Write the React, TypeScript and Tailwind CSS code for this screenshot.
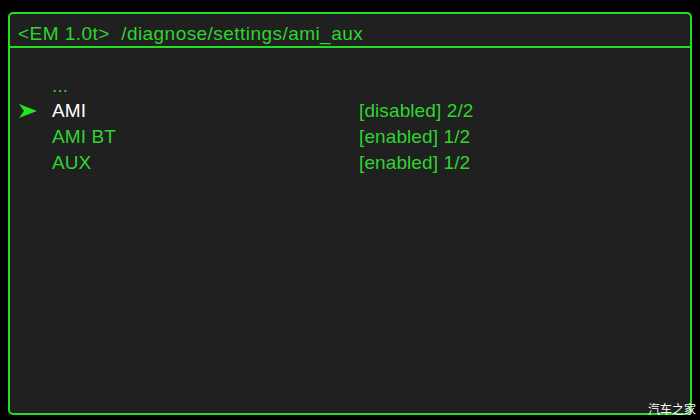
import React from 'react';

interface Row {
  name: string;
  value: string;
  active?: boolean;
}

const rows: Row[] = [
  { name: 'AMI', value: '[disabled] 2/2', active: true },
  { name: 'AMI BT', value: '[enabled] 1/2' },
  { name: 'AUX', value: '[enabled] 1/2' },
];

function Pointer() {
  return (
    <svg width="18" height="14" viewBox="0 0 18 14" className="block">
      <path d="M0 0 L18 7 L0 14 L5 7 Z" fill="#22e622" />
    </svg>
  );
}

export default function App(): React.ReactElement {
  return (
    <div
      className="relative w-[700px] h-[420px] bg-black pt-[12px] pl-[8px] pr-[8px] pb-[5px] overflow-hidden"
      style={{ fontFamily: '"Liberation Sans", Arial, sans-serif' }}
    >
      <div className="flex flex-col h-full border-2 border-[#22dd22] rounded-[5px] bg-[#202020]">
        <div className="h-[34px] flex items-end pb-[1px] pl-[8px] border-b-2 border-[#22dd22] text-[19px] tracking-[0.45px] leading-[22px] text-[#2fd42f] whitespace-pre">
          {'<EM 1.0t>  /diagnose/settings/ami_aux'}
        </div>
        <div className="flex flex-col pt-[24px] text-[19px] tracking-[0.1px]">
          <div className="h-[26px] flex items-center pl-[42px] text-[#2fd42f] leading-none">...</div>
          {rows.map((r) => (
            <div key={r.name} className="h-[26px] flex items-center">
              <div className="w-[42px] flex items-center pl-[9px]">{r.active && <Pointer />}</div>
              <div className={`w-[307px] ${r.active ? 'text-white' : 'text-[#2fd42f]'}`}>{r.name}</div>
              <div className="text-[#2fd42f]">{r.value}</div>
            </div>
          ))}
        </div>
      </div>
      <div
        className="absolute right-[4px] bottom-[5px] text-[12px] text-white leading-none"
        style={{ fontFamily: '"Noto Sans CJK SC", sans-serif' }}
      >
        汽车之家
      </div>
    </div>
  );
}
